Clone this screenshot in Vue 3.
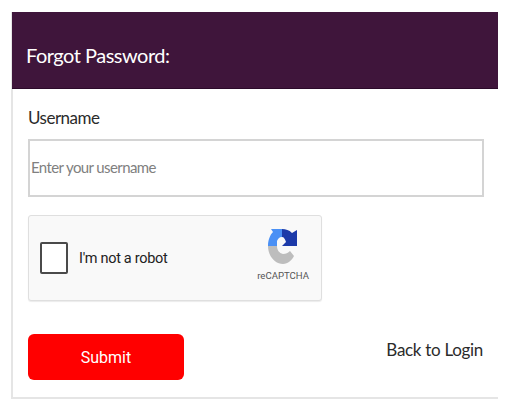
<script setup>
const username = "";
</script>

<template>
  <div class="card">
    <div class="card-head">Forgot Password:</div>
    <form class="card-body" @submit.prevent>
      <label class="field-label" for="username">Username</label>
      <input id="username" class="field-input" type="text" :value="username" placeholder="Enter your username" />

      <div class="captcha">
        <span class="captcha-box"></span>
        <span class="captcha-text">I'm not a robot</span>
        <div class="captcha-logo">
          <svg width="30" height="36" viewBox="0 0 30 36">
            <path fill="#4a90f5" d="M0 17 C0 11 2 6 5 3 L3 0 H14 V8 C11 8 10 10 9 12 L9 17 Z" />
            <path fill="#1c3aa9" d="M14 0 C18 0 21 1 24 4 L29 1 V17 H14 L18 13 C17 10 16 8 14 8 Z" />
            <path fill="#bdbdbd" d="M0 17 H9 C9 21 11 24 15 25 C18 25 20 24 22 22 L26 27 C24 31 20 35 15 35 C7 35 0 27 0 17 Z" />
          </svg>
          <span class="captcha-name">reCAPTCHA</span>
        </div>
      </div>

      <div class="actions">
        <button class="submit-btn" type="submit">Submit</button>
        <a class="back-link" href="#">Back to Login</a>
      </div>
    </form>
  </div>
</template>

<style scoped>
.card {
  width: 487px;
  height: 387px;
  margin: 12px 0 0 11px;
  border-left: 2px solid #e5e5e5;
  border-bottom: 2px solid #e5e5e5;
  box-sizing: border-box;
  font-family: Lato, "Noto Sans", sans-serif;
  color: #2b2b2b;
}

.card-head {
  height: 77px;
  margin-left: -1px;
  padding: 32px 0 0 14px;
  box-sizing: border-box;
  background: #3f153b;
  border-bottom: 1px solid #2c0a2a;
  color: #fff;
  font-size: 20px;
  letter-spacing: -0.5px;
  line-height: 22px;
}

.card-body {
  display: flex;
  flex-direction: column;
  align-items: flex-start;
  padding: 18px 14px 0 15px;
}

.field-label {
  font-size: 17px;
  letter-spacing: -0.5px;
  line-height: 22px;
}

.field-input {
  width: 456px;
  height: 58px;
  margin-top: 10px;
  padding: 0 1px 2px;
  box-sizing: border-box;
  border: 2px solid #d4d4d4;
  outline: none;
  font-family: inherit;
  font-size: 15px;
  letter-spacing: -0.6px;
}

.field-input::placeholder {
  color: #808080;
}

.captcha {
  display: flex;
  align-items: center;
  width: 294px;
  height: 86px;
  margin-top: 18px;
  padding: 0 12px 0 11px;
  box-sizing: border-box;
  background: #f9f9f9;
  border: 1px solid #dfdfdf;
  border-radius: 3px;
  box-shadow: 0 1px 1px rgba(0, 0, 0, 0.08);
  font-family: Roboto, sans-serif;
}

.captcha-box {
  width: 28px;
  height: 32px;
  box-sizing: border-box;
  background: #fff;
  border: 2px solid #4a4a4a;
  border-radius: 2px;
}

.captcha-text {
  margin-left: 11px;
  font-size: 14.5px;
  letter-spacing: -0.3px;
  color: #222;
}

.captcha-logo {
  display: flex;
  flex-direction: column;
  align-items: center;
  margin-left: auto;
  padding-bottom: 6px;
}

.captcha-name {
  margin-top: 5px;
  font-size: 9.6px;
  color: #555;
}

.actions {
  display: flex;
  justify-content: space-between;
  width: 455px;
  margin-top: 33px;
}

.submit-btn {
  width: 156px;
  height: 46px;
  border: none;
  border-radius: 6px;
  background: #ff0000;
  color: #fff;
  font-family: Roboto, sans-serif;
  font-size: 16px;
}

.back-link {
  margin-top: 5px;
  font-size: 17px;
  letter-spacing: -0.3px;
  line-height: 22px;
  color: #2b2b2b;
  text-decoration: none;
}
</style>

<style>
html,
body {
  background: #fff;
}
</style>
